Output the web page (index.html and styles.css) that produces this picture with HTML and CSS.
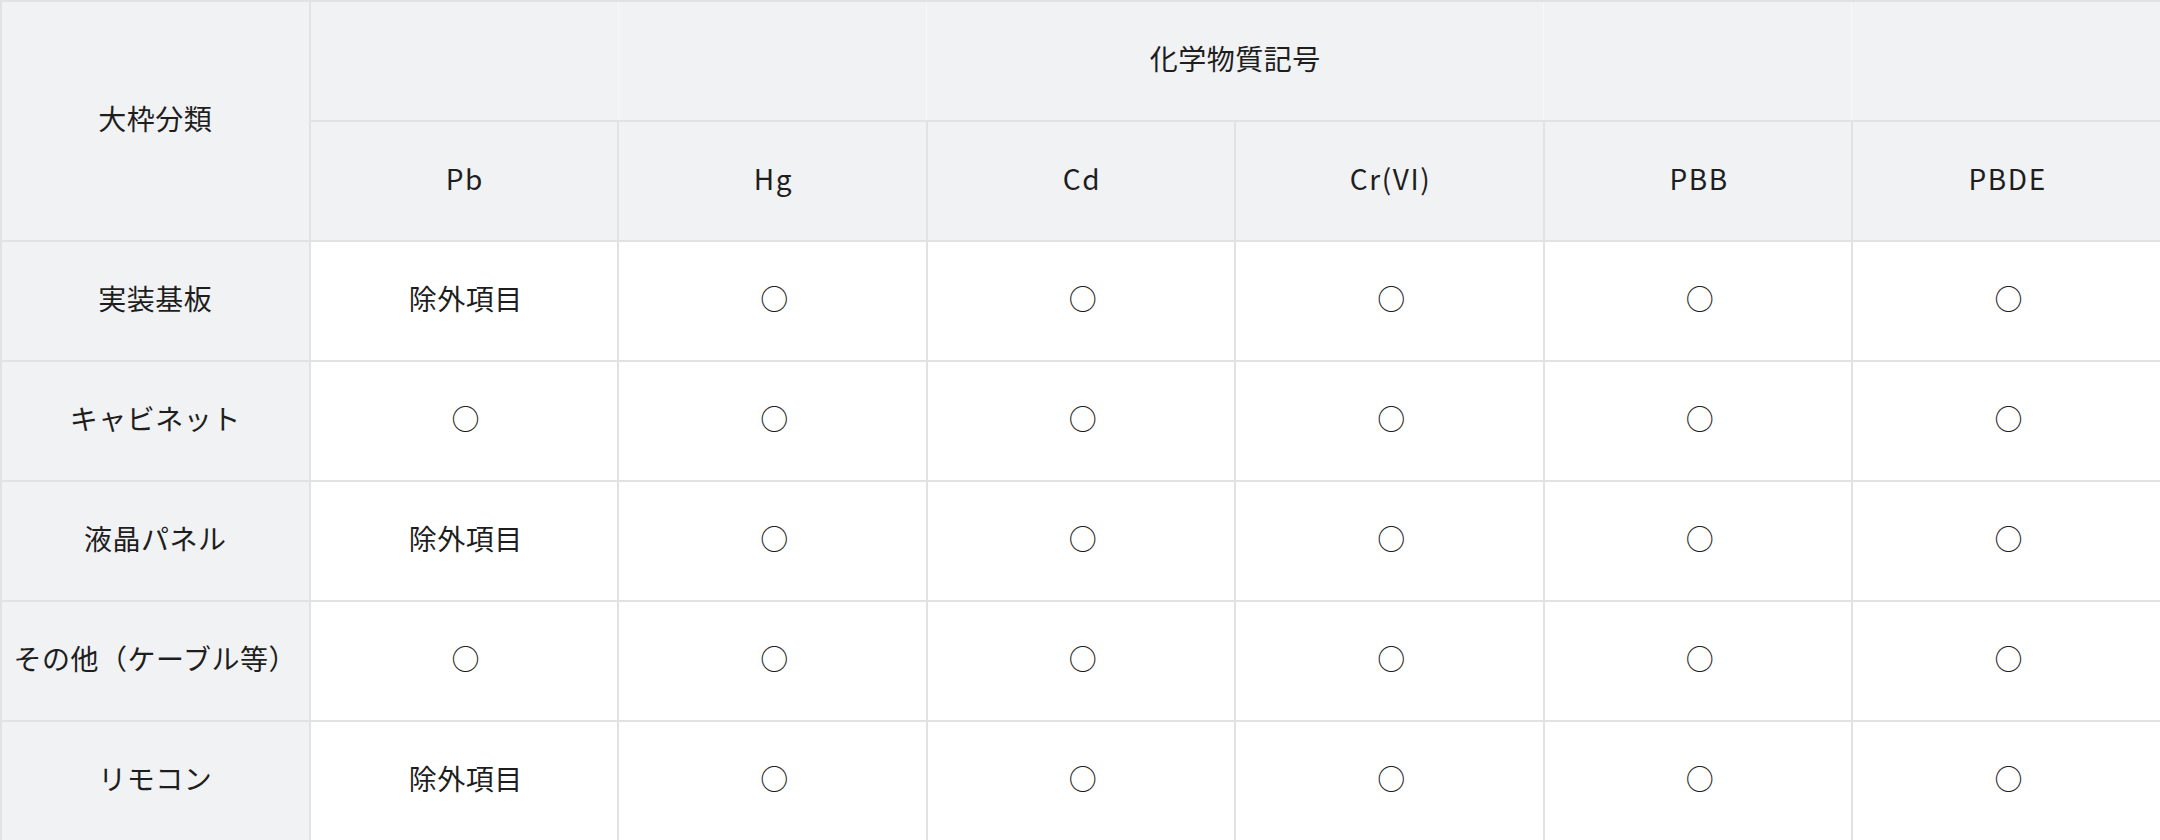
FILE: index.html
```html
<!DOCTYPE html>
<html lang="ja">
<head>
<meta charset="utf-8">
<link rel="stylesheet" href="styles.css">
</head>
<body>
<table class="rohs">
  <colgroup>
    <col class="c"><col class="c"><col class="c"><col class="c"><col class="c"><col class="c"><col class="c">
  </colgroup>
  <thead>
    <tr class="row">
      <th rowspan="2" class="hd">大枠分類</th>
      <th colspan="6" class="hd span">化学物質記号</th>
    </tr>
    <tr class="row">
      <th class="hd sym">Pb</th>
      <th class="hd sym">Hg</th>
      <th class="hd sym">Cd</th>
      <th class="hd sym">Cr(VI)</th>
      <th class="hd sym">PBB</th>
      <th class="hd sym">PBDE</th>
    </tr>
  </thead>
  <tbody>
    <tr class="row">
      <th class="hd">実装基板</th>
      <td>除外項目</td><td>○</td><td>○</td><td>○</td><td>○</td><td>○</td>
    </tr>
    <tr class="row">
      <th class="hd">キャビネット</th>
      <td>○</td><td>○</td><td>○</td><td>○</td><td>○</td><td>○</td>
    </tr>
    <tr class="row">
      <th class="hd">液晶パネル</th>
      <td>除外項目</td><td>○</td><td>○</td><td>○</td><td>○</td><td>○</td>
    </tr>
    <tr class="row">
      <th class="hd">その他（ケーブル等）</th>
      <td>○</td><td>○</td><td>○</td><td>○</td><td>○</td><td>○</td>
    </tr>
    <tr class="row">
      <th class="hd">リモコン</th>
      <td>除外項目</td><td>○</td><td>○</td><td>○</td><td>○</td><td>○</td>
    </tr>
  </tbody>
</table>
</body>
</html>
```

FILE: styles.css
```css
html, body {
  margin: 0;
  padding: 0;
  background: #ffffff;
  overflow: hidden;
}
body {
  font-family: "Noto Sans CJK JP", "Noto Sans", sans-serif;
  color: #1e1e1e;
}
.rohs {
  border-collapse: collapse;
  table-layout: fixed;
  width: 2162px;
}
.c {
  width: 14.2857%;
}
.row {
  height: 120px;
}
.rohs th,
.rohs td {
  border: 2px solid #e1e2e4;
  text-align: center;
  vertical-align: middle;
  font-size: 28px;
  font-weight: 400;
  letter-spacing: 0.5px;
  padding: 0 0 4px;
  line-height: 1.4;
}
.rohs td {
  background: #ffffff;
  padding-left: 4px;
}
.rohs .hd {
  background: #f1f2f4;
}
.rohs .sym {
  letter-spacing: 1.6px;
  padding-left: 2px;
}
.rohs .span {
  background:
    linear-gradient(90deg,
      transparent calc(16.6667% - 1px), #f7f8f9 calc(16.6667% - 1px), #f7f8f9 16.6667%, transparent 16.6667%,
      transparent calc(33.3333% - 1px), #f7f8f9 calc(33.3333% - 1px), #f7f8f9 33.3333%, transparent 33.3333%,
      transparent calc(50% - 1px), #f7f8f9 calc(50% - 1px), #f7f8f9 50%, transparent 50%,
      transparent calc(66.6667% - 1px), #f7f8f9 calc(66.6667% - 1px), #f7f8f9 66.6667%, transparent 66.6667%,
      transparent calc(83.3333% - 1px), #f7f8f9 calc(83.3333% - 1px), #f7f8f9 83.3333%, transparent 83.3333%),
    #f1f2f4;
}
```
